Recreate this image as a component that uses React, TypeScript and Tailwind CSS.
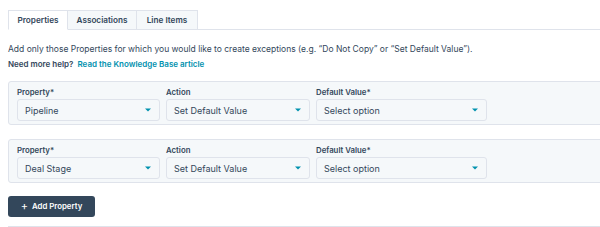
import React from 'react';

const font = { fontFamily: 'Inter, "Noto Sans", sans-serif' };

const Caret: React.FC = () => (
  <svg width="6" height="4" viewBox="0 0 6 4" className="shrink-0">
    <path d="M0 0.5 H6 L3 3.5 Z" fill="#0091ae" />
  </svg>
);

const Select: React.FC<{ value: string; width: string }> = ({ value, width }) => (
  <div className={`${width} h-[22px] flex items-center justify-between pl-[7px] pr-[8px] bg-[#f5f8fa] border border-[#dfe3eb] rounded-[3px]`}>
    <span className="text-[9px] text-[#33475b] leading-none">{value}</span>
    <Caret />
  </div>
);

const Field: React.FC<{ label: string; value: string; width: string }> = ({ label, value, width }) => (
  <div className="flex flex-col">
    <span className="text-[7.8px] font-semibold leading-[11px] mb-[1px] text-[#33475b]">{label}</span>
    <Select value={value} width={width} />
  </div>
);

const PropertyRow: React.FC<{ property: string }> = ({ property }) => (
  <div className="w-[600px] h-[44px] bg-[#f5f8fa] border border-[#dfe3eb] rounded-[3px] pl-[8px] pt-[5px] flex gap-[6px]">
    <Field label="Property*" value={property} width="w-[143px]" />
    <Field label="Action" value="Set Default Value" width="w-[144px]" />
    <Field label="Default Value*" value="Select option" width="w-[171px]" />
  </div>
);

const tabs = ['Properties', 'Associations', 'Line Items'];
const tabWidths = ['w-[60px]', 'w-[69px]', 'w-[61px]'];

export default function App() {
  return (
    <div className="w-[600px] h-[227px] overflow-hidden bg-white text-[#33475b]" style={font}>
      <div className="pl-2 pt-[10px]">
        <div className="flex border-b border-[#dfe3eb]">
          {tabs.map((t, i) => (
            <div
              key={t}
              className={`${tabWidths[i]} h-[20px] -mb-px flex items-center justify-center text-[8.2px] font-semibold border-t border-r border-[#dfe3eb] ${i === 0 ? 'bg-white border-l border-b border-b-white' : 'bg-[#f5f8fa] border-b border-b-[#dfe3eb]'}`}
            >
              {t}
            </div>
          ))}
        </div>

        <p className="mt-[13px] text-[8.5px] leading-[12px]">
          Add only those Properties for which you would like to create exceptions (e.g. “Do Not Copy” or “Set Default Value”).
        </p>
        <p className="mt-[3px] text-[8px] leading-[12px] font-semibold">
          Need more help?{' '}
          <span className="text-[#0091ae] ml-[2px]">Read the Knowledge Base article</span>
        </p>

        <div className="mt-[11px] flex flex-col gap-[14px]">
          <PropertyRow property="Pipeline" />
          <PropertyRow property="Deal Stage" />
        </div>

        <button className="mt-[13px] w-[87px] h-[21px] bg-[#33475b] rounded-[3px] text-white text-[7.8px] font-semibold flex items-center justify-center gap-[4px]">
          <span className="text-[11px] font-normal leading-none -mt-px">+</span>
          Add Property
        </button>

        <div className="mt-[9px] border-b border-[#dfe3eb]" />
      </div>
    </div>
  );
}
